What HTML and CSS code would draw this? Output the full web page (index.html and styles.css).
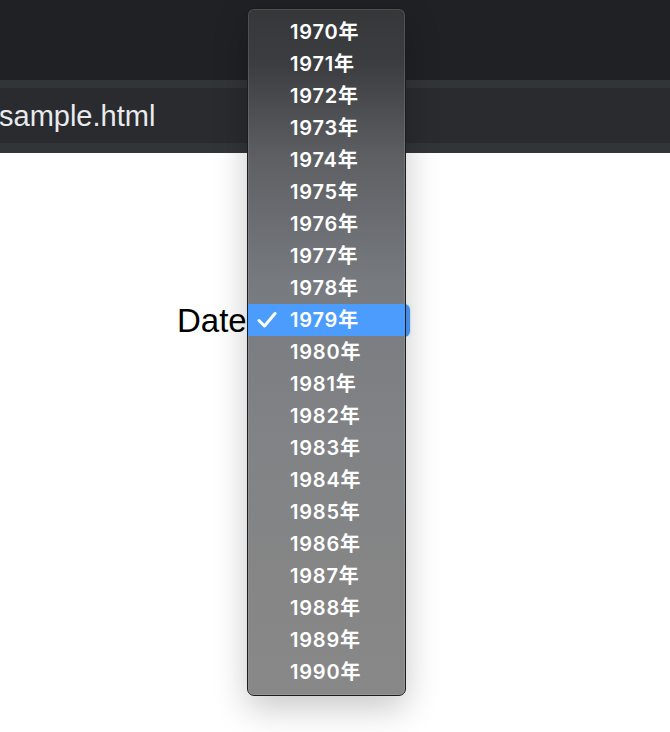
FILE: index.html
```html
<!DOCTYPE html>
<html lang="ja">
<head>
  <meta charset="UTF-8" />
  <title>sample.html</title>
  <link rel="stylesheet" href="styles.css">
</head>
<body>

  <div class="chrome">
    <div class="titlebar"></div>
    <div class="strip"></div>
    <div class="toolbar"><span class="tab-title">sample.html</span></div>
    <div class="strip strip-bottom"></div>
  </div>

  <main class="page">
    <label class="field">
      <span class="field-label">Date</span>
      <span class="select"></span>
    </label>
  </main>

  <ul class="menu">
    <li>1970年</li>
    <li>1971年</li>
    <li>1972年</li>
    <li>1973年</li>
    <li>1974年</li>
    <li>1975年</li>
    <li>1976年</li>
    <li>1977年</li>
    <li>1978年</li>
    <li class="selected">
      <svg class="check" width="20" height="18" viewBox="0 0 20 18">
        <polyline points="2,9.5 7.5,15 18,2.5" fill="none" stroke="#fff" stroke-width="3" stroke-linecap="round" stroke-linejoin="round"/>
      </svg>
      1979年
    </li>
    <li>1980年</li>
    <li>1981年</li>
    <li>1982年</li>
    <li>1983年</li>
    <li>1984年</li>
    <li>1985年</li>
    <li>1986年</li>
    <li>1987年</li>
    <li>1988年</li>
    <li>1989年</li>
    <li>1990年</li>
  </ul>

</body>
</html>
```

FILE: styles.css
```css
body {
  margin: 0;
  background: #fff;
  font-family: "Liberation Sans", Arial, sans-serif;
  overflow: hidden;
}

.titlebar {
  height: 80px;
  background: #202124;
}

.strip {
  height: 8px;
  background: #323538;
}

.strip-bottom {
  height: 10px;
}

.toolbar {
  height: 55px;
  background: #292b2e;
  display: flex;
  align-items: center;
  overflow: hidden;
}

.tab-title {
  margin-left: -1px;
  padding-top: 2px;
  font-size: 29px;
  color: #e8eaed;
}

.page {
  padding-top: 151px;
}

.field {
  display: flex;
  align-items: center;
  padding-left: 177px;
}

.field-label {
  flex: none;
  width: 71px;
  font-size: 33px;
  color: #000;
  line-height: 33px;
  white-space: nowrap;
}

.select {
  width: 162px;
  height: 33px;
  border-radius: 6px;
  background: #4b9cfd;
  box-shadow: 0 0 2px rgba(75, 156, 253, 0.6);
}

.menu {
  position: absolute;
  left: 247px;
  top: 8px;
  width: 157px;
  margin: 0;
  padding: 7px 0;
  list-style: none;
  border: 1px solid #1c1c1e;
  border-radius: 7px;
  background: linear-gradient(to bottom, #363739 0%, #3c3d40 8%, #5e6064 22%, #777a7f 40%, #808285 60%, #868686 85%, #888 100%);
  box-shadow: inset 0 0 0 1px rgba(255, 255, 255, 0.12), 0 12px 34px rgba(0, 0, 0, 0.22);
}

.menu li {
  position: relative;
  height: 32px;
  line-height: 32px;
  padding-left: 42px;
  font-size: 20px;
  font-weight: 600;
  letter-spacing: 0.8px;
  color: #fff;
  font-family: Inter, "Noto Sans CJK JP", sans-serif;
}

.menu li.selected {
  background: #4b9cfd;
}

.check {
  position: absolute;
  left: 9px;
  top: 7px;
}
```
